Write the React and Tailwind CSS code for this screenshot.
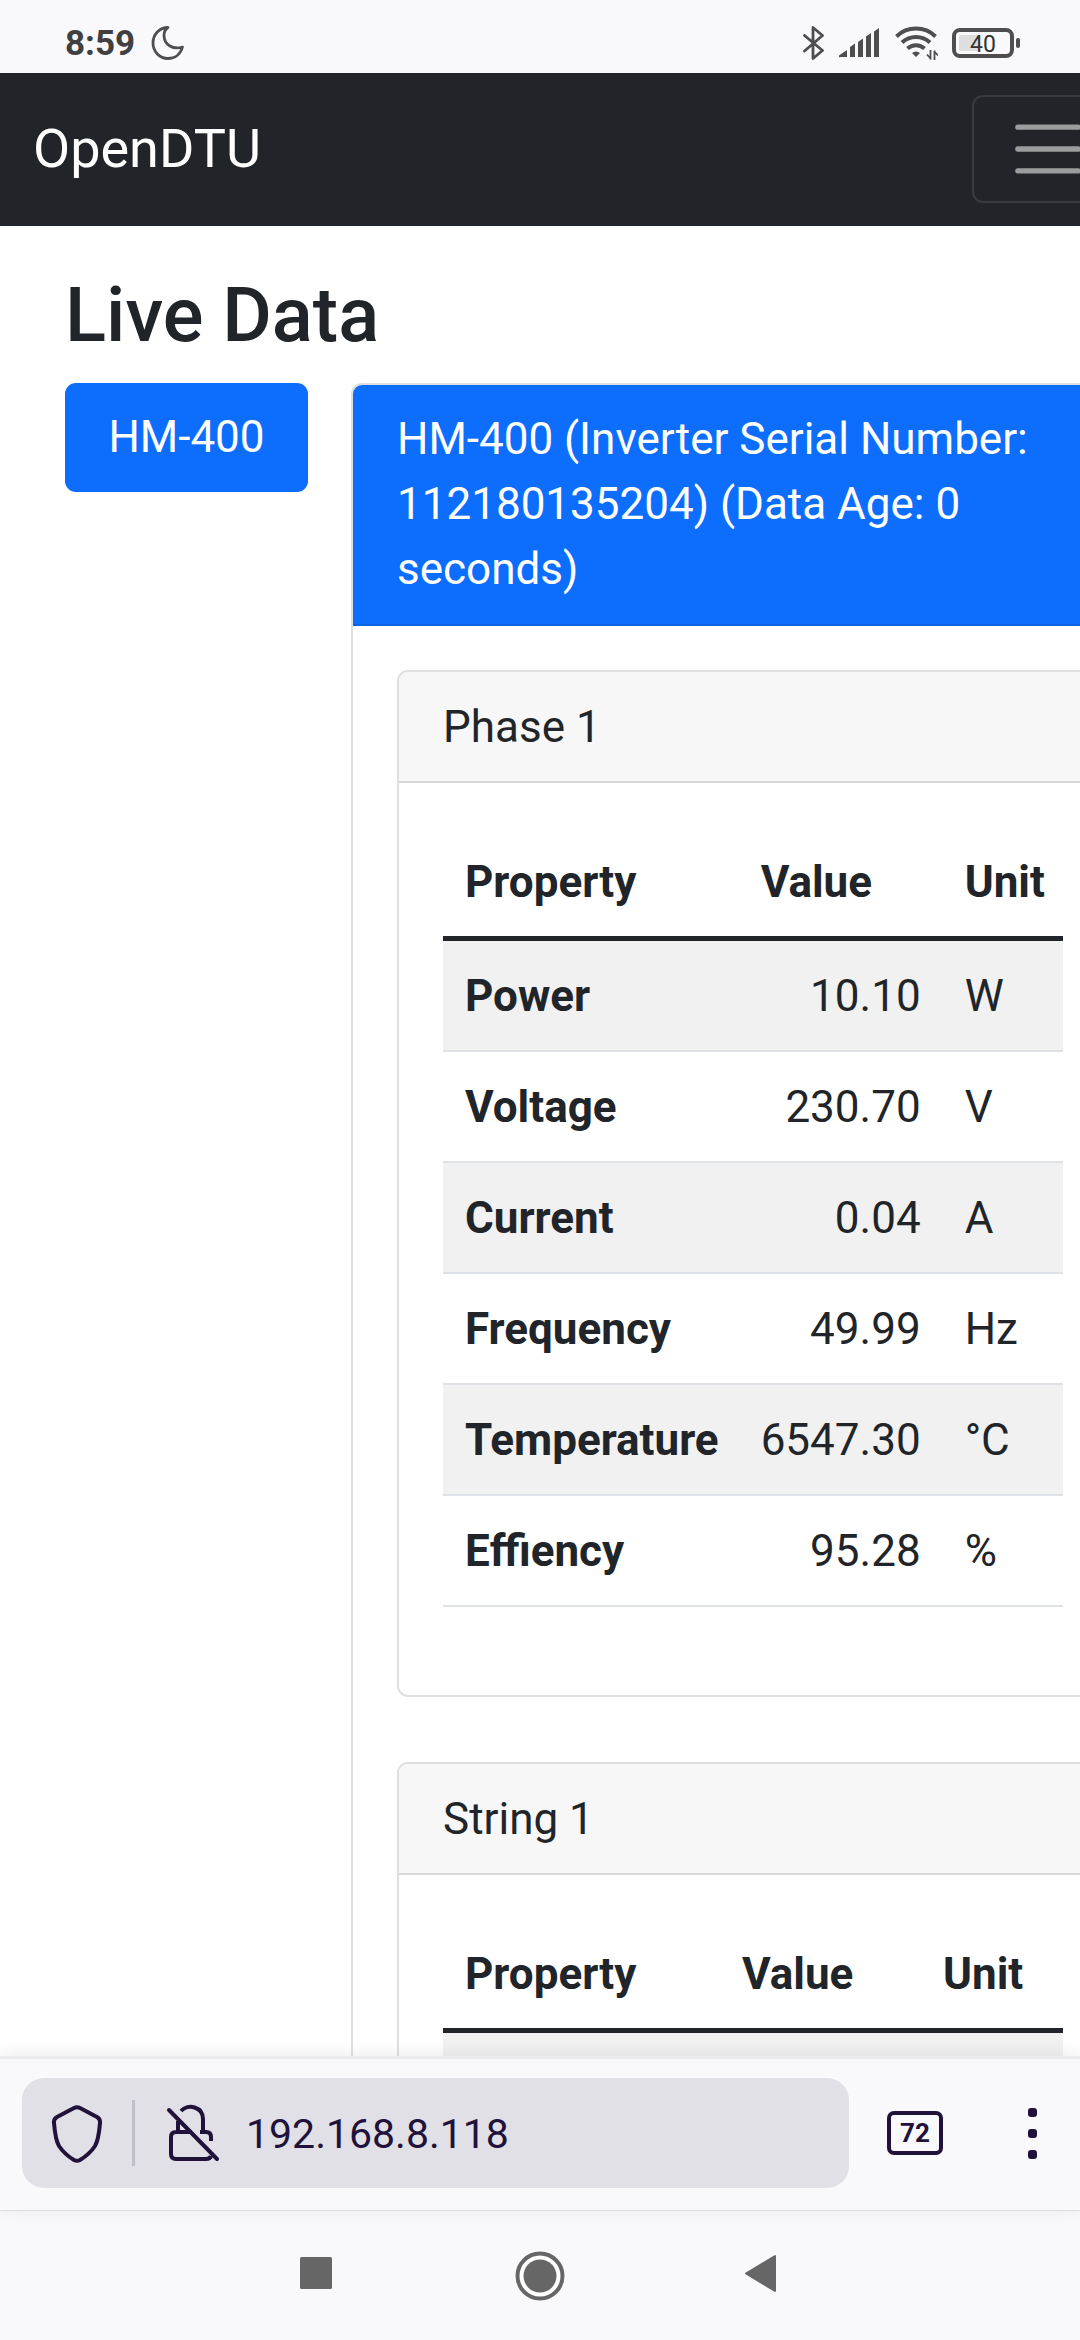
const PHASE = [
  ["Power", "10.10", "W"],
  ["Voltage", "230.70", "V"],
  ["Current", "0.04", "A"],
  ["Frequency", "49.99", "Hz"],
  ["Temperature", "6547.30", "°C"],
  ["Effiency", "95.28", "%"],
];

function StatusBar() {
  return (
    <header className="flex h-[73px] shrink-0 items-center justify-between bg-[#f9f9fb] pt-3 pr-[59px] pl-[65px] text-[#4e4e4e]">
      <div className="flex items-center gap-4">
        <span className="pt-0.5 text-[35px] leading-10 font-bold text-[#404040]">8:59</span>
        <svg width="34" height="36" viewBox="0 0 34 36" fill="none" stroke="currentColor" strokeWidth="2.8" strokeLinejoin="round" aria-hidden="true">
          <path d="M17 2.5C8.500 2.500 2 9.500 2 18s6.500 15.500 15 15.500c7 0 12.500-4.300 14.500-11.500-9 3-18.500-2-18.500-11.500 0-3.500 1.500-6.500 4-8z" />
        </svg>
      </div>
      <div className="flex items-center gap-3.5">
        <svg width="22" height="34" viewBox="0 0 22 34" fill="none" stroke="currentColor" strokeWidth="2.8" strokeLinejoin="round" strokeLinecap="round" aria-hidden="true">
          <path d="M1.500 9.500 19.500 24.500 10 32.500V1.500L19.500 9.500 1.500 25" />
        </svg>
        <svg width="42" height="30" viewBox="0 0 42 30" fill="currentColor" aria-hidden="true">
          <path d="M0 27.500 8 22v7H1.500a1 1 0 0 1-1.500-1.500zM11 19l5-3.500V29h-5zM19 14l5-3.500V29h-5zM27 8.500 32 5v24h-5zM35 3.500 40 0v29h-5z" />
        </svg>
        <svg width="43" height="34" viewBox="0 0 43 34" fill="none" stroke="currentColor" strokeWidth="4" aria-hidden="true">
          <path d="M1.500 10.500a28 28 0 0 1 39 0M7 16.500a20.500 20.500 0 0 1 28 0M12.500 22.500a12.500 12.500 0 0 1 17 0" />
          <path d="M17 27a6 6 0 0 1 8 0l-4 4z" fill="currentColor" stroke="none" />
          <path d="M35.500 24v9.500M36 33l-4-4.500M39.500 34v-9.500M39 25l4 4.500" strokeWidth="1.800" />
        </svg>
        <svg width="69" height="30" viewBox="0 0 69 30" aria-hidden="true">
          <rect x="2" y="2" width="58" height="26" rx="6" fill="none" stroke="currentColor" strokeWidth="4" />
          <rect x="7" y="7" width="20" height="16" rx="2" fill="#dedede" />
          <rect x="64" y="10" width="4" height="10" rx="2" fill="currentColor" />
          <text x="31" y="24" textAnchor="middle" fontSize="23" fill="#333">40</text>
        </svg>
      </div>
    </header>
  );
}

function Card({ title, rows, cols }) {
  return (
    <section className="rounded-[11px] border-2 border-[#dfdfdf] bg-white">
      <h2 className="rounded-t-[9px] border-b-2 border-[#d8d8d8] bg-[#f7f7f7] px-11 pt-[22px] pb-[21px]">{title}</h2>
      <div className="p-11">
        <table className="mb-11 w-full border-separate border-spacing-0">
          <thead>
            <tr>
              <th scope="col" className={"border-b-5 border-[#212529] pt-[22px] pr-5 pb-[21px] pl-[22px] text-left " + cols[0]}>Property</th>
              <th scope="col" className={"border-b-5 border-[#212529] px-[22px] pt-[22px] pb-[21px] text-left " + cols[1]}>Value</th>
              <th scope="col" className="border-b-5 border-[#212529] pt-[22px] pr-4 pb-[21px] pl-[22px] text-left">Unit</th>
            </tr>
          </thead>
          <tbody>
            {rows.map(([name, value, unit]) => (
              <tr key={name} className="odd:bg-[#f1f1f1]">
                <th scope="row" className="h-[111px] border-b-2 border-[#dee2e6] pt-[22px] pr-5 pb-[21px] pl-[22px] text-left">{name}</th>
                <td className="border-b-2 border-[#dee2e6] pt-[22px] pr-[22px] pb-[21px] pl-5 text-right">{value}</td>
                <td className="border-b-2 border-[#dee2e6] pt-[22px] pr-4 pb-[21px] pl-[22px]">{unit}</td>
              </tr>
            ))}
          </tbody>
        </table>
      </div>
    </section>
  );
}

function Toolbar() {
  return (
    <div className="relative z-10 flex h-[155px] shrink-0 items-start border-t-3 border-b border-t-[#ebebed] border-b-[#dedee2] bg-[#f9f9fb] pt-[19px] pr-[43px] pl-[22px] text-[#20123a] shadow-[0_-2px_16px_rgba(0,0,0,0.08)]">
      <div className="flex h-[110px] min-w-0 flex-1 items-center rounded-[22px] bg-[#e0e0e6] pl-[27px]">
        <button type="button" aria-label="Tracking protection">
          <svg width="56" height="60" viewBox="0 0 56 60" fill="none" stroke="currentColor" strokeWidth="4" strokeLinejoin="round" aria-hidden="true">
            <path d="M25 5q3-1.500 6 0L48 14q3.500 2 3 6C50 32 49 38 46 43 42 49 36 54 31 57q-3 1.500-6 0C20 54 14 49 10 43 7 38 6 32 5 20q-.5-4 3-6z" />
          </svg>
        </button>
        <span className="ml-[27px] h-[66px] w-[3px] bg-[#bfbfc9]" />
        <button type="button" aria-label="Connection not secure" className="ml-[29px]">
          <svg width="58" height="60" viewBox="0 0 58 60" fill="none" stroke="currentColor" strokeWidth="4" strokeLinecap="round" aria-hidden="true">
            <path d="M5 7 53 56" />
            <path d="M14 18V29M28 29H12q-5 0-5 5V51q0 5 5 5H42q4 0 5-3M47 38V34q0-5-5-5H36M39 29V16C39 4 24 0 17 8" strokeLinecap="butt" />
          </svg>
        </button>
        <input aria-label="Address" defaultValue="192.168.8.118" className="ml-6 min-w-0 flex-1 bg-transparent pt-0.5 text-[41px] leading-[50px] outline-none" />
      </div>
      <button type="button" aria-label="Tabs" className="mt-[33px] ml-[38px] flex h-11 w-14 items-center justify-center rounded-[7px] border-4 border-current text-[26px] leading-7 font-bold">
        72
      </button>
      <button type="button" aria-label="Menu" className="mt-[30px] ml-[85px] flex w-[9px] flex-col gap-3">
        <span className="h-[9px] rounded-[3px] bg-current" />
        <span className="h-[9px] rounded-[3px] bg-current" />
        <span className="h-[9px] rounded-[3px] bg-current" />
      </button>
    </div>
  );
}

function SystemNav() {
  return (
    <nav className="flex h-[129px] shrink-0 items-center justify-center gap-[174px] bg-[#f9f9fb] text-[#666]">
      <button type="button" aria-label="Recent apps">
        <svg width="50" height="50" viewBox="0 0 50 50" fill="currentColor" aria-hidden="true">
          <rect x="9" y="6" width="32" height="32" rx="1.500" />
        </svg>
      </button>
      <button type="button" aria-label="Home">
        <svg width="50" height="50" viewBox="0 0 50 50" aria-hidden="true">
          <circle cx="25" cy="25" r="22.500" fill="#fff" stroke="currentColor" strokeWidth="4" />
          <circle cx="25" cy="25" r="16.500" fill="currentColor" />
        </svg>
      </button>
      <button type="button" aria-label="Back">
        <svg width="50" height="50" viewBox="0 0 50 50" fill="currentColor" stroke="currentColor" strokeWidth="2" strokeLinejoin="round" aria-hidden="true">
          <path d="M7 22.500 36 5v35z" />
        </svg>
      </button>
    </nav>
  );
}

export default function App() {
  return (
    <div className="flex h-screen flex-col overflow-hidden bg-white font-[Roboto,sans-serif] text-[44px] leading-[66px] text-[#212529]">
      <StatusBar />
      <main className="min-h-0 flex-1 overflow-hidden">
        <div className="-mr-[75px]">
          <nav className="flex h-[153px] items-center justify-between bg-[#212529] pr-[31px] pl-[33px]">
            <a href="#" className="pb-0.5 text-[54px] leading-[82px] text-white">OpenDTU</a>
            <button type="button" aria-label="Toggle navigation" className="mb-0.5 rounded-[11px] border-2 border-white/10 px-[33px] py-[11px]">
              <svg width="82" height="82" viewBox="0 0 30 30" fill="none" stroke="#fff" strokeOpacity=".55" strokeWidth="2" strokeLinecap="round" aria-hidden="true">
                <path d="M4 7h22M4 15h22M4 23h22" />
              </svg>
            </button>
          </nav>
          <div className="pt-11 pl-[65px]">
            <h1 className="mb-[22px] text-[76px] leading-[91px] font-medium">Live Data</h1>
            <div className="flex items-start gap-[43px]">
              <button type="button" className="w-[243px] shrink-0 rounded-[11px] bg-[#0d6efd] pt-[21px] pb-[22px] whitespace-nowrap text-white">HM-400</button>
              <div className="min-w-0 flex-1 rounded-[11px] border-2 border-[#dfdfdf]">
                <div className="rounded-t-[9px] border-b-2 border-[#0c63e4] bg-[#0d6efd] px-11 pt-[22px] pb-[22px] leading-[65px] text-white">
                  HM-400 (Inverter Serial Number: 112180135204) (Data Age: 0 seconds)
                </div>
                <div className="flex flex-col gap-[65px] p-11">
                  <Card title="Phase 1" rows={PHASE} cols={["w-[295px]", "w-[204px]"]} />
                  <Card title="String 1" rows={[["", "", ""]]} cols={["w-[277px]", "w-[201px]"]} />
                </div>
              </div>
            </div>
          </div>
        </div>
      </main>
      <Toolbar />
      <SystemNav />
    </div>
  );
}
